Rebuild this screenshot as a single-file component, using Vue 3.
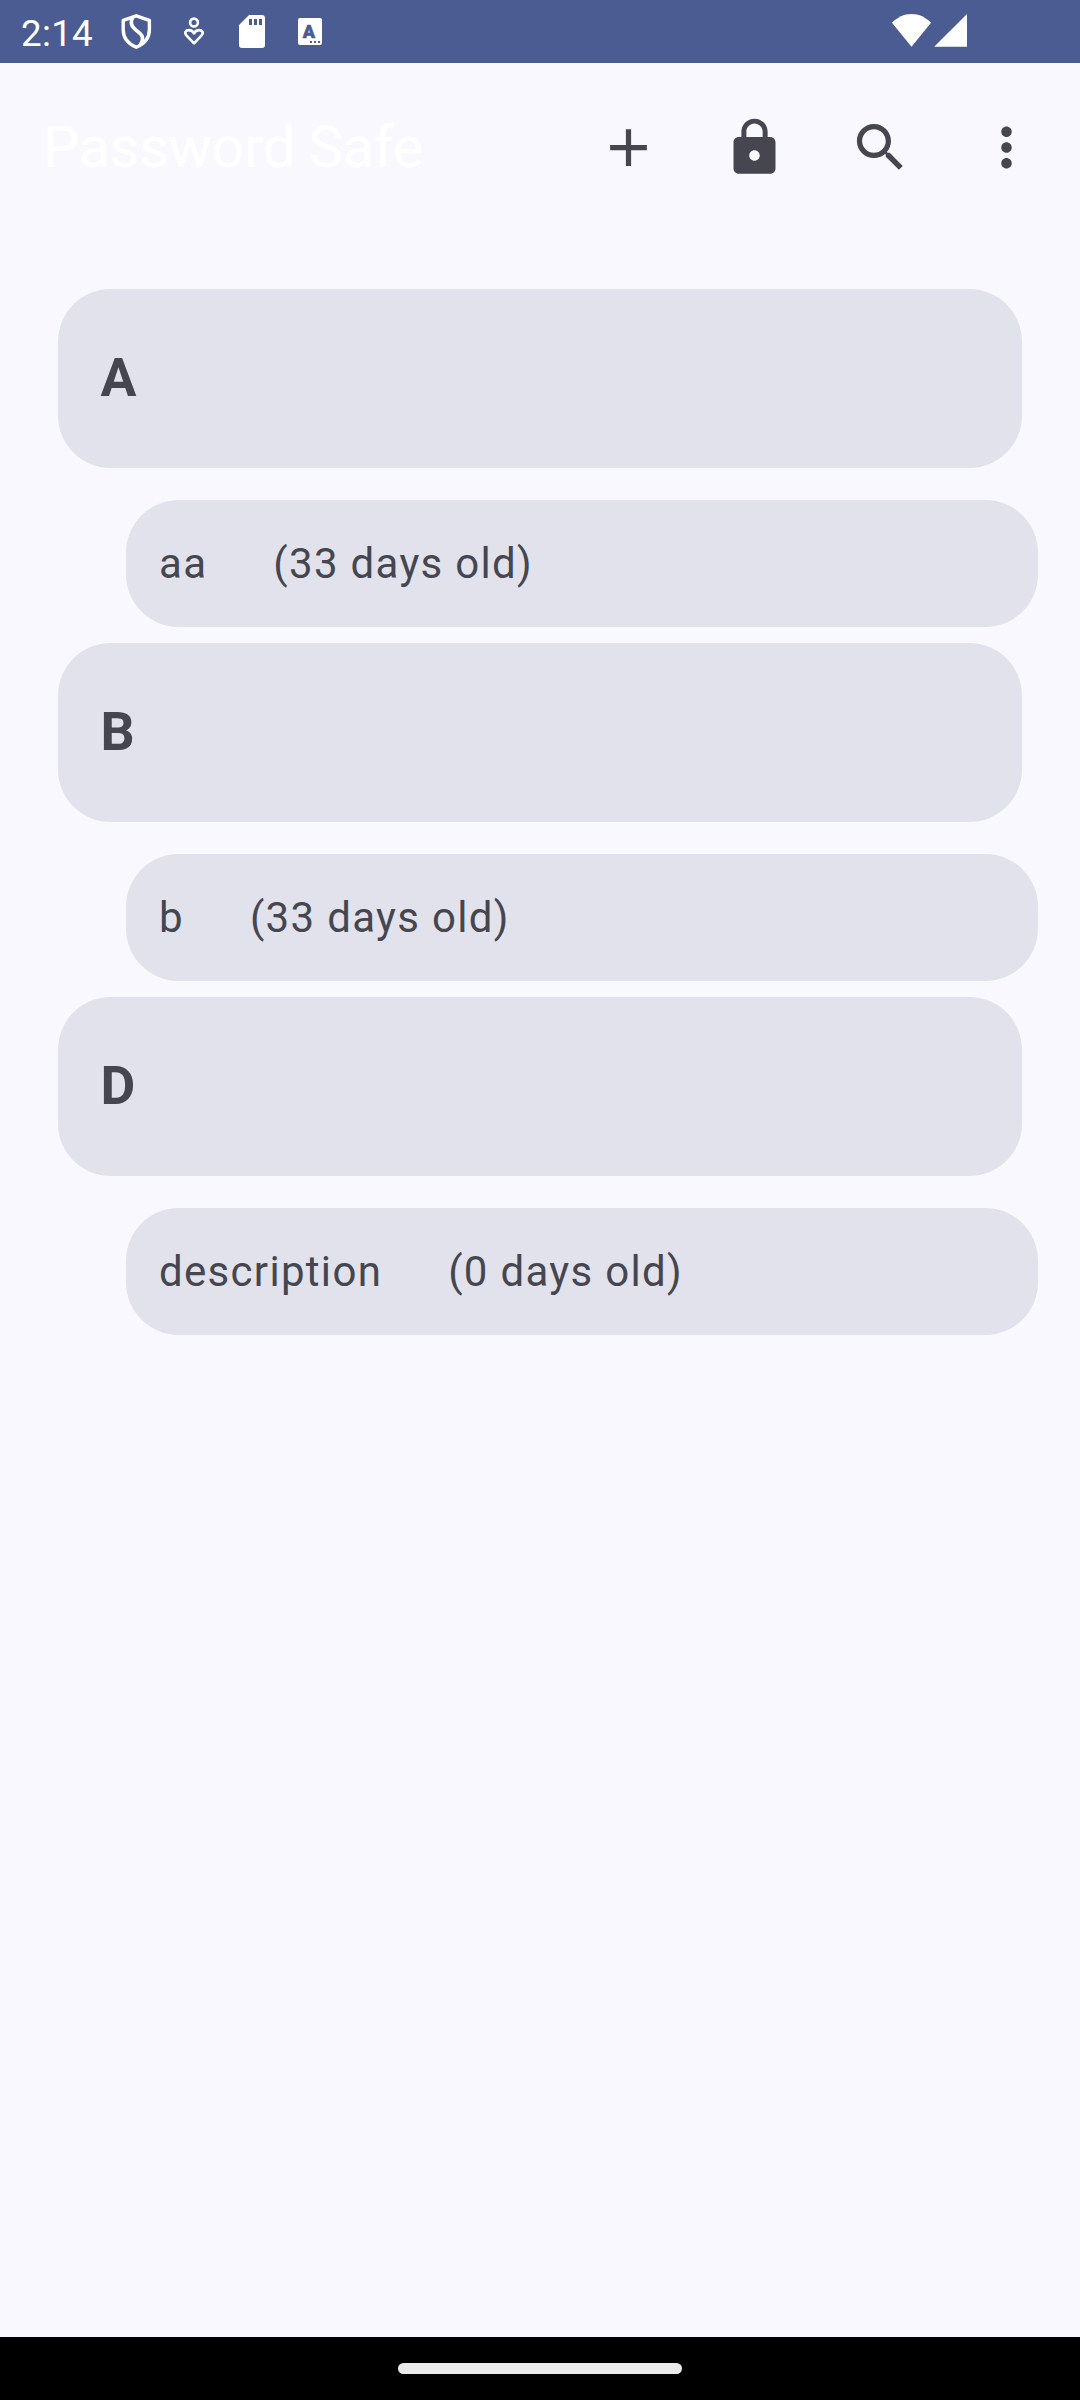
<script setup>
const groups = [
  { name: 'A', entries: [{ title: 'aa', age: '(33 days old)' }] },
  { name: 'B', entries: [{ title: 'b', age: '(33 days old)' }] },
  { name: 'D', entries: [{ title: 'description', age: '(0 days old)' }] },
]
</script>

<template>
  <div class="screen">
    <header class="status">
      <span class="clock">2:14</span>
      <div class="notes">
        <svg width="34" height="40" viewBox="119 12 34 40" fill="none" stroke="#fff" stroke-width="3.4" stroke-linejoin="round">
          <path d="M136.3 15.8L149.4 20.4V29.5C149.4 38 144.6 43.8 136.3 47.3C128 43.8 123.2 38 123.2 29.5V20.4Z" />
          <path d="M132.8 17.2C130.4 21.5 130.9 25.7 134.6 28.9L140 33.4C143.4 36.3 143.4 40 140.3 44.8" stroke-width="3.6" />
        </svg>
        <svg class="care" width="24" height="34" viewBox="182 14 24 34" fill="none" stroke="#fff" stroke-width="2.6">
          <circle cx="194" cy="22.5" r="3.9" />
          <path d="M194 43.3L186.6 35.6C183.8 32.5 186 30.1 188.9 30.1C191.4 30.1 193.2 31.6 194 33.4C194.8 31.6 196.6 30.1 199.1 30.1C202 30.1 204.2 32.5 201.4 35.6Z" stroke-linejoin="round" />
        </svg>
        <svg class="card-icon" width="26" height="33" viewBox="239 15 26 33" fill="#fff">
          <path fill-rule="evenodd" d="M249 15H262A3 3 0 0 1 265 18V45A3 3 0 0 1 262 48H242A3 3 0 0 1 239 45V25ZM249 19V25H252V19ZM254 19V25H257V19ZM259 19V25H262V19Z" />
        </svg>
        <span class="letter">
          <b>A</b>
          <svg width="10" height="2" viewBox="0 0 10 2" fill="#4a5c92"><path d="M0 0h2v2H0zM4 0h2v2H4zM8 0h2v2H8z" /></svg>
        </span>
      </div>
      <svg class="signals" width="75" height="33" viewBox="892 14 75 33" fill="#fff">
        <path d="M911.5 46.7L892 22.8C897 17.4 904 14 911.5 14C919 14 926 17.4 931 22.8Z" />
        <path d="M967 14V46.8H934.2Z" />
      </svg>
    </header>

    <div class="toolbar">
      <h1>Password Safe</h1>
      <nav>
        <svg viewBox="0 0 24 24"><path d="M19 13h-6v6h-2v-6H5v-2h6V5h2v6h6v2z" /></svg>
        <svg viewBox="0 0 24 24"><path fill-rule="evenodd" d="M18 8h-1V6c0-2.76-2.24-5-5-5S7 3.24 7 6v2H6c-1.1 0-2 .9-2 2v10c0 1.1.9 2 2 2h12c1.1 0 2-.9 2-2V10c0-1.1-.9-2-2-2zm-6 9c-1.1 0-2-.9-2-2s.9-2 2-2 2 .9 2 2-.9 2-2 2zm3.1-9H8.9V6c0-1.71 1.39-3.1 3.1-3.1s3.1 1.39 3.1 3.1v2z" /></svg>
        <svg viewBox="0 0 24 24"><path d="M15.5 14h-.79l-.28-.27C15.41 12.59 16 11.11 16 9.5 16 5.91 13.09 3 9.5 3S3 5.91 3 9.5 5.91 16 9.5 16c1.61 0 3.09-.59 4.23-1.57l.27.28v.79l5 4.99L20.49 19l-4.99-5zm-6 0C7.01 14 5 11.99 5 9.5S7.01 5 9.5 5 14 7.01 14 9.5 11.99 14 9.5 14z" /></svg>
        <svg viewBox="0 0 24 24"><path d="M12 8c1.1 0 2-.9 2-2s-.9-2-2-2-2 .9-2 2 .9 2 2 2zm0 2c-1.1 0-2 .9-2 2s.9 2 2 2 2-.9 2-2-.9-2-2-2zm0 6c-1.1 0-2 .9-2 2s.9 2 2 2 2-.9 2-2-.9-2-2-2z" /></svg>
      </nav>
    </div>

    <main>
      <section v-for="group in groups" :key="group.name">
        <div class="group">{{ group.name }}</div>
        <div v-for="entry in group.entries" :key="entry.title" class="entry">
          <span>{{ entry.title }}</span>
          <span>{{ entry.age }}</span>
        </div>
      </section>
    </main>

    <footer><div class="pill"></div></footer>
  </div>
</template>

<style>
body {
  margin: 0;
  background: #faf8ff;
}
</style>

<style scoped>
.screen {
  width: 1080px;
  height: 2400px;
  display: flex;
  flex-direction: column;
  background: #faf8ff;
  color: #45464f;
  font-family: Roboto, sans-serif;
  overflow: hidden;
}
svg {
  display: block;
  flex: none;
}
.status {
  height: 63px;
  flex: none;
  display: flex;
  align-items: flex-start;
  background: #4a5c92;
  color: #fff;
}
.clock {
  width: 98px;
  padding: 12px 0 0 21px;
  font-size: 36.75px;
  line-height: 43px;
  letter-spacing: 0.3px;
}
.notes {
  display: flex;
  align-items: flex-start;
  flex: 1;
  padding-top: 12px;
}
.care {
  margin: 2px 0 0 29px;
}
.card-icon {
  margin: 3px 0 0 33px;
}
.letter {
  box-sizing: border-box;
  width: 24px;
  height: 27px;
  margin: 6px 0 0 33px;
  padding: 2px 2px 2px 0;
  border-radius: 2px;
  display: flex;
  flex-direction: column;
  align-items: flex-end;
  background: #fff;
  color: #4a5c92;
}
.letter b {
  width: 22px;
  height: 21px;
  text-align: center;
  font-size: 18px;
  font-weight: 900;
  line-height: 23px;
  -webkit-text-stroke: 0.6px #4a5c92;
}
.signals {
  margin: 14px 113px 0 0;
}
.toolbar {
  height: 168px;
  flex: none;
  display: flex;
  align-items: center;
  justify-content: space-between;
  padding: 0 42px 0 43px;
}
h1 {
  margin: 0;
  color: #fff;
  font-weight: 400;
  font-size: 57.75px;
  line-height: 68px;
  letter-spacing: -0.4px;
}
nav {
  display: flex;
  gap: 63px;
}
nav svg {
  width: 63px;
  height: 63px;
  fill: #45464f;
}
main {
  flex: 1;
  padding-top: 58px;
}
section {
  padding: 0 42px 16px 58px;
}
.group,
.entry {
  display: flex;
  align-items: center;
  border-radius: 52.5px;
  background: #e2e2ec;
}
.group {
  height: 179px;
  margin-right: 16px;
  padding: 0 0 3px 42.5px;
  box-sizing: border-box;
  font-size: 53.5px;
  font-weight: 700;
}
.entry {
  height: 127px;
  margin: 32px 0 0 68px;
  padding-left: 33px;
  box-sizing: border-box;
  gap: 66px;
  font-size: 42px;
  letter-spacing: 1.31px;
}
footer {
  height: 63px;
  flex: none;
  display: flex;
  align-items: center;
  justify-content: center;
  background: #000;
}
.pill {
  width: 284px;
  height: 11px;
  border-radius: 5.5px;
  background: #ebebeb;
}
</style>
